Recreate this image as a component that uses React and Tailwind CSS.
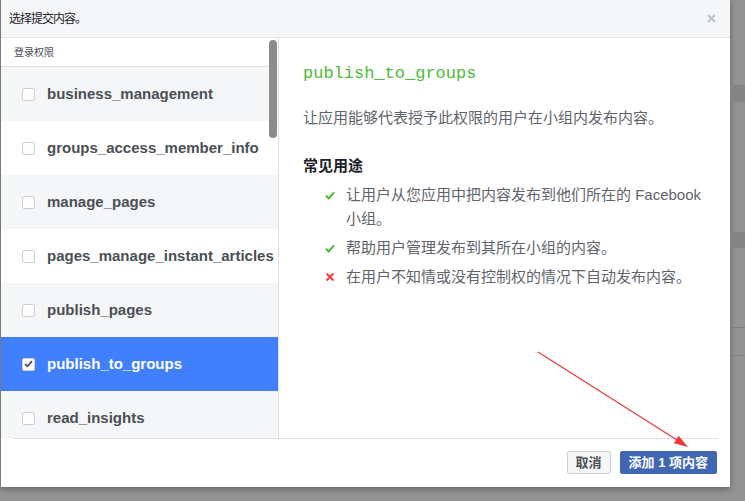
import React from 'react';

const perms = [
  { name: 'business_management', bg: 'bg-[#f5f6f7]' },
  { name: 'groups_access_member_info', bg: 'bg-white' },
  { name: 'manage_pages', bg: 'bg-[#f5f6f7]' },
  { name: 'pages_manage_instant_articles', bg: 'bg-white' },
  { name: 'publish_pages', bg: 'bg-[#f5f6f7]' },
  { name: 'publish_to_groups', bg: 'bg-[#4080ff]', selected: true },
  { name: 'read_insights', bg: 'bg-[#f5f6f7]' },
];

const uses = [
  { ok: true, text: '让用户从您应用中把内容发布到他们所在的 Facebook 小组。' },
  { ok: true, text: '帮助用户管理发布到其所在小组的内容。' },
  { ok: false, text: '在用户不知情或没有控制权的情况下自动发布内容。' },
];

const Check = () => (
  <svg width="10" height="9" viewBox="0 0 10 9" className="shrink-0">
    <path d="M1 4.8 L3.8 7.4 L9 1.4" fill="none" stroke="#42b72a" strokeWidth="2" />
  </svg>
);

const Cross = () => (
  <svg width="10" height="10" viewBox="0 0 10 10" className="shrink-0">
    <path d="M1.5 1.5 L8.5 8.5 M8.5 1.5 L1.5 8.5" fill="none" stroke="#fa3e3e" strokeWidth="2" />
  </svg>
);

const Checkbox = ({ checked }) => (
  <span className="w-[13px] h-[13px] rounded-[2px] border border-[#ccd0d5] bg-[#fdfdfd] flex items-center justify-center shrink-0">
    {checked && (
      <svg width="9" height="8" viewBox="0 0 9 8">
        <path d="M1 4 L3.4 6.3 L8 1.2" fill="none" stroke="#4b4f56" strokeWidth="1.8" />
      </svg>
    )}
  </span>
);

export default function App() {
  return (
    <div
      className="relative w-[745px] h-[501px] bg-[#939393] flex overflow-hidden"
      style={{ fontFamily: '"Liberation Sans", "Noto Sans CJK SC", sans-serif' }}
    >
      <div className="w-[730px] h-[487px] bg-white flex flex-col border-l border-[#7a7a7a] shadow-[0_2px_6px_rgba(0,0,0,0.35)] shrink-0">
        <div className="h-[38px] bg-[#f5f6f7] border-b border-[#e5e5e5] flex items-center justify-between pl-[8px] pr-[14px] shrink-0">
          <span className="text-[12px] tracking-[-1px] text-[#1d2129]">选择提交内容。</span>
          <svg width="9" height="9" viewBox="0 0 9 9">
            <path d="M1 1 L8 8 M8 1 L1 8" stroke="#bec2c9" strokeWidth="2" />
          </svg>
        </div>

        <div className="flex h-[400px] shrink-0">
          <div className="relative w-[278px] border-r border-[#dddfe2] overflow-hidden shrink-0">
            <div className="h-[29px] border-b border-[#dddfe2] flex items-center pl-[13px] text-[10px] text-[#4b4f56]">
              登录权限
            </div>
            {perms.map((p) => (
              <div key={p.name} className={`h-[54px] flex items-center pl-[21px] ${p.bg}`}>
                <Checkbox checked={p.selected} />
                <span
                  className={`ml-3 text-[15px] font-bold whitespace-nowrap ${
                    p.selected ? 'text-white' : 'text-[#4b4f56]'
                  }`}
                >
                  {p.name}
                </span>
              </div>
            ))}
            <div className="absolute right-[1px] top-[2px] w-[8px] h-[98px] rounded-full bg-[#8c8c8c]" />
          </div>

          <div className="flex-1 pl-6 pr-6 pt-6">
            <div
              className="text-[17px] leading-[24px] text-[#4cbb37]"
              style={{ fontFamily: '"Liberation Mono", monospace' }}
            >
              publish_to_groups
            </div>
            <p className="mt-5 text-[15px] leading-[24px] text-[#5f646c]">
              让应用能够代表授予此权限的用户在小组内发布内容。
            </p>
            <div className="mt-6 text-[15px] leading-[24px] font-bold text-[#1d2129]">常见用途</div>
            <ul className="mt-[5px] flex flex-col gap-[5px]">
              {uses.map((u) => (
                <li key={u.text} className="flex pl-[22px]">
                  <span className="h-[24px] w-[21px] flex items-center shrink-0">
                    {u.ok ? <Check /> : <Cross />}
                  </span>
                  <span className="text-[15px] leading-[24px] text-[#5f646c]">{u.text}</span>
                </li>
              ))}
            </ul>
          </div>
        </div>

        <div className="mx-3 border-t border-[#dddfe2] pt-[12px] flex justify-end gap-[9px]">
          <button className="h-[23px] px-[8px] border border-[#ccd0d5] bg-[#f5f6f7] rounded-[2px] text-[13px] font-bold text-[#4b4f56] leading-none">
            取消
          </button>
          <button className="h-[23px] px-[8px] mr-[1px] border border-[#4267b2] bg-[#4267b2] rounded-[2px] text-[13px] font-bold text-white leading-none">
            添加 1 项内容
          </button>
        </div>
      </div>

      <div className="flex-1 flex flex-col">
        <div className="h-[85px]" />
        <div className="h-[17px] bg-[#848484]" />
        <div className="h-[130px]" />
        <div className="h-[16px] bg-[#848484]" />
        <div className="h-[80px] border-b border-[#7c7c7c]" />
        <div className="h-[28px] border-b border-[#7c7c7c]" />
      </div>

      <svg className="absolute inset-0 pointer-events-none" width="745" height="501">
        <line x1="538" y1="352" x2="677" y2="440" stroke="#f03a3a" strokeWidth="1.3" />
        <polygon points="688,447 673.8,443.3 678.6,435.7" fill="#f03a3a" />
      </svg>
    </div>
  );
}
